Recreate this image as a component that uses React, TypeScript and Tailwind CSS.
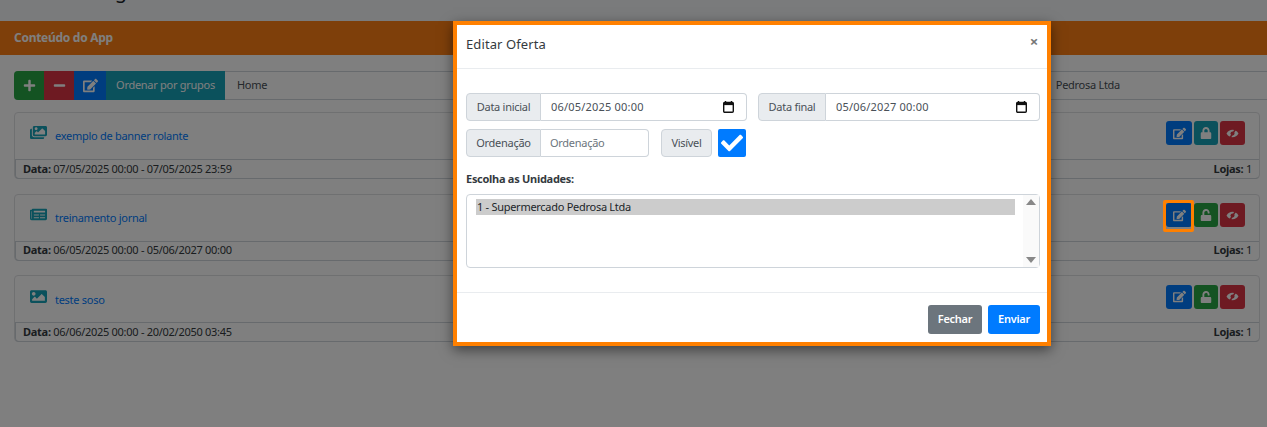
import React from 'react';
import { FaPlus, FaMinus, FaEdit, FaImages, FaNewspaper, FaImage, FaLock, FaUnlock, FaCheck } from 'react-icons/fa';

const offers = [
  { id: 1, title: 'exemplo de banner rolante', icon: FaImages, date: '07/05/2025 00:00 - 07/05/2025 23:59', locked: true },
  { id: 2, title: 'treinamento jornal', icon: FaNewspaper, date: '06/05/2025 00:00 - 05/06/2027 00:00', locked: false },
  { id: 3, title: 'teste soso', icon: FaImage, date: '06/06/2025 00:00 - 20/02/2050 03:45', locked: false },
];

function CalendarIcon() {
  return (
    <svg width="11" height="12" viewBox="0 0 11 12" className="shrink-0">
      <path d="M2.5 0v2M8.5 0v2" stroke="#111" strokeWidth="1.4" />
      <rect x="0.7" y="1.5" width="9.6" height="9.8" rx="1" fill="none" stroke="#111" strokeWidth="1.4" />
      <rect x="0.7" y="1.5" width="9.6" height="2.6" fill="#111" />
    </svg>
  );
}

// eye with a slash running up to the right, the stock icon sets draw it the other way
function HiddenEyeIcon() {
  return (
    <svg width="13" height="11" viewBox="0 0 13 11">
      <path d="M0.5 5.5C2 3 4 1.8 6.5 1.8S11 3 12.5 5.5C11 8 9 9.2 6.5 9.2S2 8 0.5 5.5z" fill="#fff" />
      <circle cx="6.5" cy="5.5" r="2" fill="#dc3545" />
      <path d="M10 0.5L3.5 10.5" stroke="#dc3545" strokeWidth="1.5" />
    </svg>
  );
}

function DateField({ label, value, labelWidth, className }: { label: string; value: string; labelWidth: string; className: string }) {
  return (
    <div className={`flex h-[28px] ${className}`}>
      <span className={`flex items-center justify-center bg-[#e9ecef] border border-[#ced4da] rounded-l-[4px] text-[#495057] whitespace-nowrap ${labelWidth}`}>{label}</span>
      <div className="flex flex-1 items-center justify-between pl-[10px] pr-[12px] border border-l-0 border-[#ced4da] rounded-r-[4px] text-[#495057]">
        <span className="tracking-[0.2px]">{value}</span>
        <CalendarIcon />
      </div>
    </div>
  );
}

function OfferCard({ offer }: { offer: (typeof offers)[number] }) {
  const Icon = offer.icon;
  const Lock = offer.locked ? FaLock : FaUnlock;
  return (
    <div className="mb-[14.75px] border border-[#dfe0e2] rounded-[4px]">
      <div className="flex items-center justify-between h-[46px] pl-[15px] pr-[14px]">
        <div className="flex items-center">
          <Icon className="text-[17px] text-[#17a2b8] -mt-[6px]" />
          <a className="ml-[8px] mt-[1px] text-[#007bff]">{offer.title}</a>
        </div>
        <div className="flex gap-[2px] -mt-[5px]">
          <span className="flex items-center justify-center w-[26px] h-[24px] rounded-[3px] bg-[#007bff] text-white text-[13px]"><FaEdit /></span>
          <span className={`flex items-center justify-center w-[24px] h-[24px] rounded-[3px] text-white text-[12px] ${offer.locked ? 'bg-[#17a2b8]' : 'bg-[#28a745]'}`}><Lock /></span>
          <span className="flex items-center justify-center w-[25px] h-[24px] rounded-[3px] bg-[#dc3545]"><HiddenEyeIcon /></span>
        </div>
      </div>
      <div className="flex items-center justify-between h-[20px] px-[7px] border border-r-0 -mb-px border-[#ced4da] rounded-b-[4px] text-[#343a40]">
        <span><b>Data:</b> {offer.date}</span>
        <span><b>Lojas:</b> 1</span>
      </div>
    </div>
  );
}

export default function App() {
  return (
    <div className="relative h-[427px] w-[1267px] overflow-hidden bg-white text-[11px] tracking-[-0.28px] text-[#212529] [font-family:'Noto_Sans',sans-serif]">
      {/* page behind the modal */}
      <div className="h-[21px] overflow-hidden bg-[#f4f6f9] pl-[71px] text-[20px] leading-[27px] tracking-normal text-[#212529]">
        <div className="-mt-[23px]">Listagem</div>
      </div>
      <div className="flex items-center h-[34px] px-[14px] bg-[#fd7e14] text-white text-[12px] font-bold">Conteúdo do App</div>
      <div className="pl-[14px] pr-[7px] pt-[16px]">
        <div className="flex items-stretch h-[29px] -mr-[7px] mb-[11.75px] border-y border-[#ced4da] rounded-l-[4px]">
          <span className="flex items-center justify-center w-[30px] -my-px rounded-l-[4px] bg-[#28a745] text-white text-[13px]"><FaPlus /></span>
          <span className="flex items-center justify-center w-[30px] -my-px bg-[#dc3545] text-white text-[13px]"><FaMinus /></span>
          <span className="flex items-center justify-center w-[32px] -my-px bg-[#007bff] text-white text-[15px]"><FaEdit /></span>
          <span className="flex items-center justify-center w-[119px] -my-px bg-[#17a2b8] text-white">Ordenar por grupos</span>
          <span className="flex flex-1 items-center justify-between pl-[12px] pr-[147px] text-[#495057]">
            <span>Home</span>
            <span>Pedrosa Ltda</span>
          </span>
        </div>
        {offers.map((o) => <OfferCard key={o.id} offer={o} />)}
      </div>

      {/* backdrop */}
      <div className="absolute inset-0 bg-black/50" />

      {/* highlight around the edit button */}
      <div className="absolute left-[1163px] top-[200px] w-[31px] h-[32px] border-[3px] border-[#ff8000] rounded-[2px]" />

      {/* modal */}
      <div className="absolute left-[453px] top-[21px] w-[598px] h-[325px] border-4 border-[#ff8000] bg-white text-[#495057] shadow-[0_4px_12px_rgba(0,0,0,0.5)]">
        <div className="flex justify-between h-[44px] pl-[9px] pr-[9px] border-b border-[#e9ecef]">
          <span className="mt-[10px] text-[13px] tracking-[0.1px] text-[#343a40]">Editar Oferta</span>
          <span className="mt-[5px] text-[15px] font-bold text-[#777]">×</span>
        </div>
        <div className="pl-[9px] pr-[7px] pt-[24px] h-[224px] border-b border-[#e9ecef]">
          <div className="flex">
            <DateField label="Data inicial" value="06/05/2025 00:00" labelWidth="w-[75px]" className="w-[281px]" />
            <DateField label="Data final" value="05/06/2027 00:00" labelWidth="w-[68px]" className="w-[282px] ml-[11px]" />
          </div>
          <div className="flex items-stretch h-[28px] mt-[8px]">
            <span className="flex items-center justify-center w-[75px] bg-[#e9ecef] border border-[#ced4da] rounded-l-[4px]">Ordenação</span>
            <span className="flex items-center w-[108px] pl-[9px] border border-l-0 border-[#ced4da] rounded-r-[4px] text-[#6c757d]">Ordenação</span>
            <span className="flex items-center justify-center w-[51px] ml-[12px] bg-[#e9ecef] border border-[#ced4da] rounded-[4px]">Visível</span>
            <span className="flex items-center justify-center w-[28px] ml-[6px] bg-[#007bff] rounded-[2px] text-white text-[22px]"><FaCheck /></span>
          </div>
          <div className="mt-[14px] leading-[16px] font-bold text-[#343a40]">Escolha as Unidades:</div>
          <div className="flex justify-between h-[74px] mt-[7px] border border-[#ced4da] rounded-[4px]">
            <div className="flex-1 pl-[9px] pr-[8px] pt-[4px]">
              <div className="h-[16px] leading-[16px] bg-[#cccccc] text-[#212529] pl-px">1 - Supermercado Pedrosa Ltda</div>
            </div>
            <div className="flex flex-col items-center justify-between w-[16px] py-[4px] bg-[#fafafa]">
              <svg width="10" height="6" viewBox="0 0 10 6"><path d="M5 0l5 6H0z" fill="#888" /></svg>
              <svg width="10" height="6" viewBox="0 0 10 6"><path d="M5 6L0 0h10z" fill="#888" /></svg>
            </div>
          </div>
        </div>
        <div className="flex justify-end gap-[6px] pt-[12px] pr-[7px]">
          <span className="flex items-center justify-center w-[54px] h-[29px] rounded-[3px] bg-[#6c757d] text-white font-semibold">Fechar</span>
          <span className="flex items-center justify-center w-[52px] h-[29px] rounded-[3px] bg-[#007bff] text-white font-semibold">Enviar</span>
        </div>
      </div>
    </div>
  );
}
